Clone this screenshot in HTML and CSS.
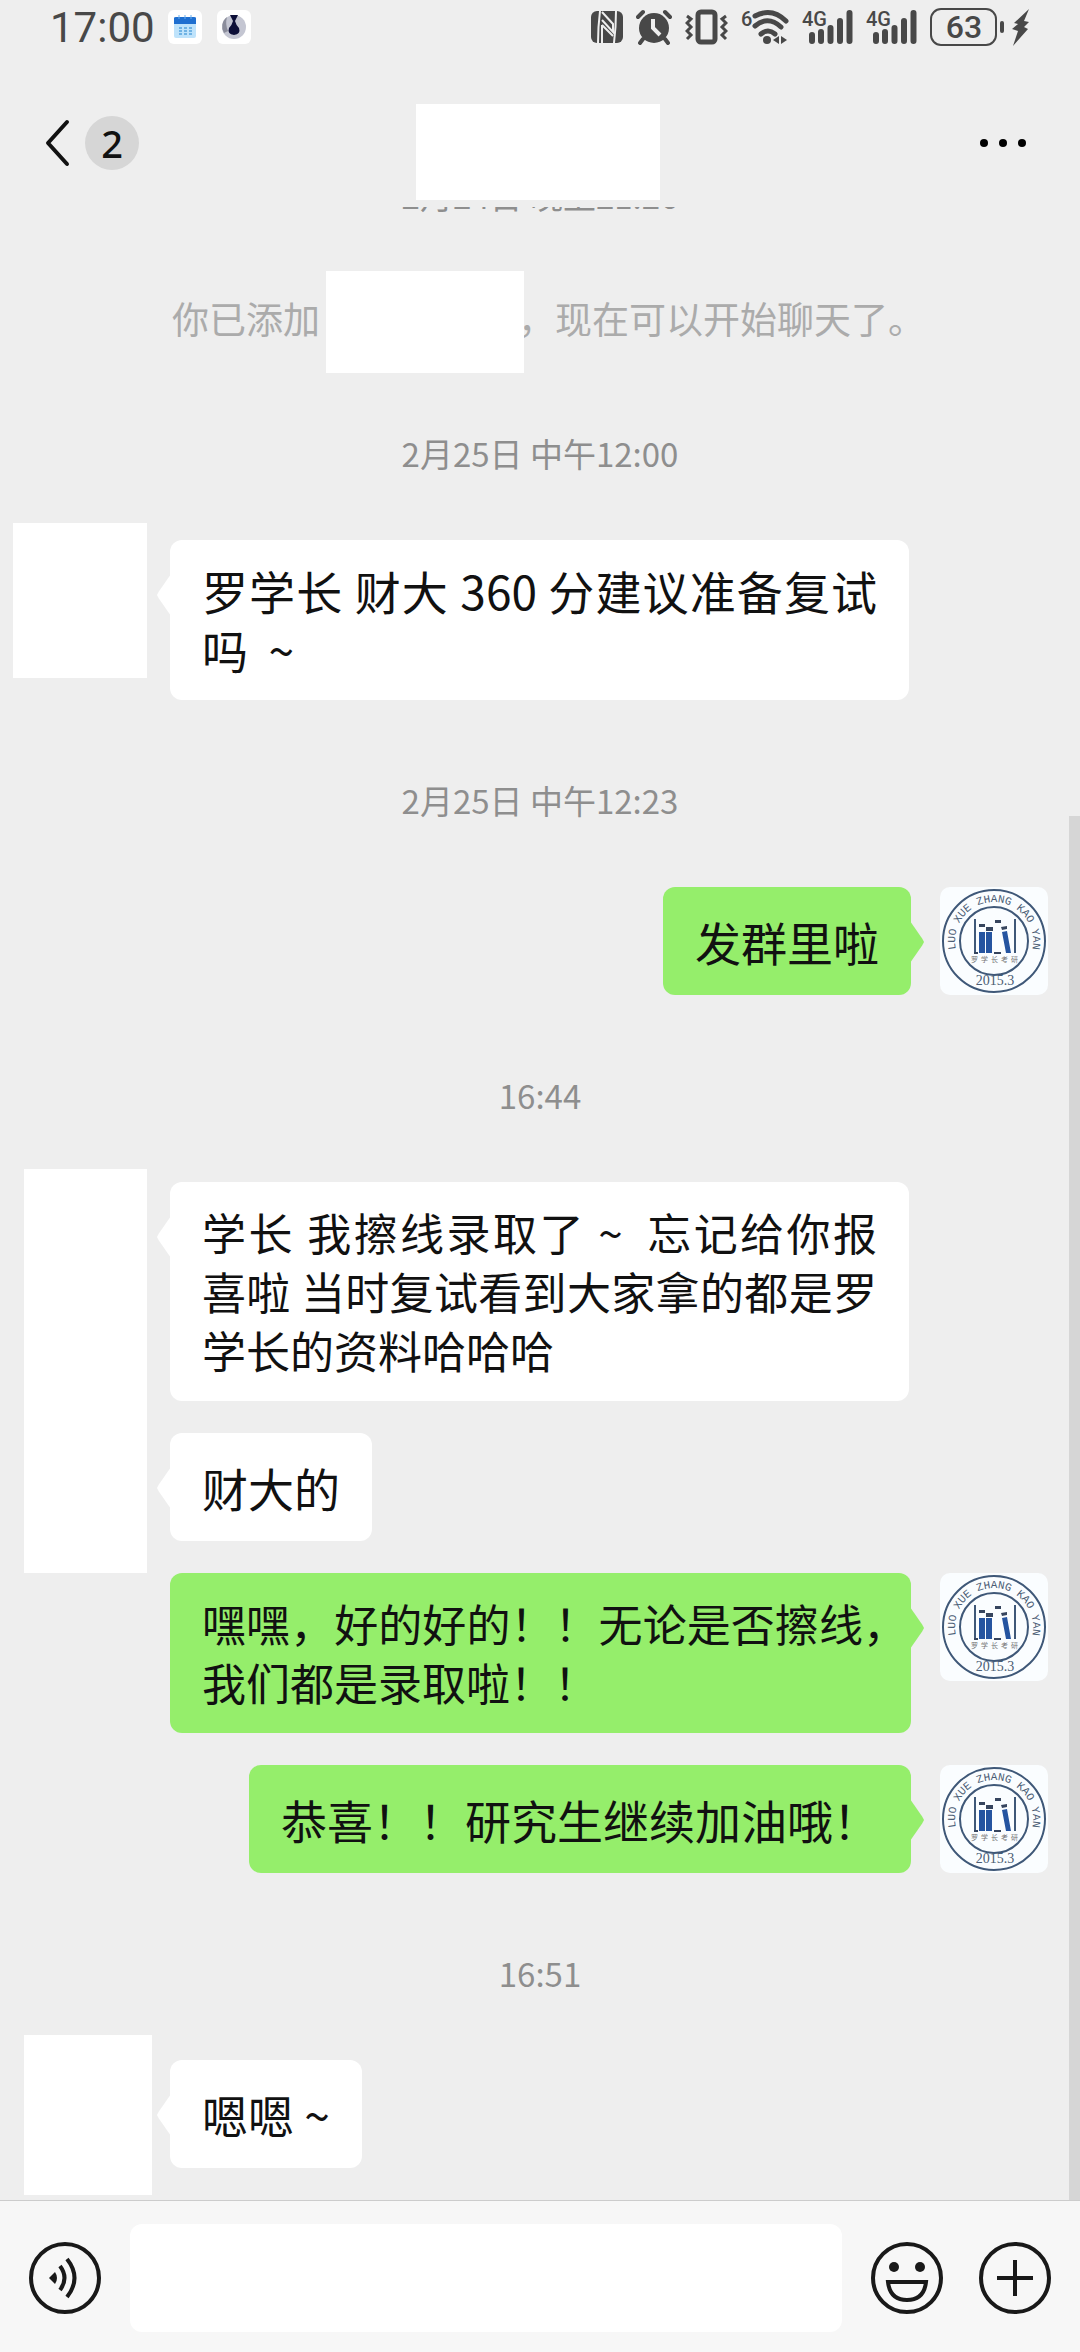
FILE: index.html
```html
<!DOCTYPE html>
<html lang="zh-CN">

<head>
    <meta charset="UTF-8" />
    <meta name="viewport" content="width=device-width, initial-scale=1.0">
    <title>聊天</title>
    <link rel="stylesheet" href="styles.css">
</head>

<body>
    <header class="header">
        <div class="status">
            <span class="clock">17:00</span>
            <svg class="chip" viewBox="0 0 34 34">
                <path d="M6 13h22v13q0 2-2 2H8q-2 0-2-2z" fill="#bfe3fb" />
                <path d="M6 14V8q0-1 2-1h18q2 0 2 1v6z" fill="#1f6fd0" />
                <path d="M11 5v4M17 5v4M23 5v4" stroke="#69aef0" stroke-width="1" />
                <path d="M11 18h3m2 0h3m2 0h3M11 21h3m2 0h3m2 0h3M11 24h3m2 0h3m2 0h3" stroke="#70b3e4" stroke-width="2" />
            </svg>
            <svg class="chip" viewBox="0 0 34 34">
                <circle cx="17" cy="17" r="12" fill="#c4c6d2" />
                <path d="M7 23a12 12 0 0 1 3-16q-2 7 1 14z" fill="#8b8d9b" />
                <path d="M13 5h8l-3 6q1 4 4 7 2 6-5 7-7-1-5-7 3-3 4-7z" fill="#0d0f38" />
            </svg>
            <div class="status-icons">
                <svg width="32" height="36" viewBox="0 0 32 36">
                    <rect x="0" y="2" width="32" height="32" rx="6" fill="#484848" />
                    <path d="M9 2q-2 16-2 32M23 34q2-16 2-32" fill="none" stroke="#eee" stroke-width="2" />
                    <path d="M11 3l11 12v8L11 11M11 16v18M11 16l11 11" fill="none" stroke="#eee" stroke-width="2" />
                </svg>
                <svg width="36" height="36" viewBox="0 0 36 36">
                    <circle cx="18" cy="19" r="15" fill="#484848" />
                    <path d="M7 30l-3 4M29 30l3 4M2 8l5-5M34 8l-5-5" stroke="#484848" stroke-width="4" stroke-linecap="round" />
                    <path d="M17 10v9l7 7" fill="none" stroke="#eee" stroke-width="4" />
                </svg>
                <svg width="43" height="36" viewBox="0 0 43 36">
                    <g fill="none" stroke="#484848">
                        <rect x="13" y="3" width="17" height="30" rx="3" stroke-width="5" />
                        <path d="M2 7l4 3-4 4 4 4-4 4 4 4-4 4M41 7l-4 3 4 4-4 4 4 4-4 4 4 4" stroke-width="3" />
                    </g>
                </svg>
                <svg width="48" height="36" viewBox="0 0 48 36">
                    <text class="net-text" x="0" y="17">6</text>
                    <path d="M14 7q17-9 31 5M14 17q13-11 26 1M20 25q7-6 14 0" fill="none" stroke="#484848" stroke-width="5" stroke-linecap="round" />
                    <circle cx="26" cy="31" r="4" fill="#484848" />
                    <path d="M38 27v8l-6-4zM40 27v8l6-4z" fill="#484848" />
                </svg>
                <svg width="51" height="36">
                    <g id="signal">
                        <text class="net-text" x="0" y="17">4G</text>
                        <path d="M10 26v6M19 23v9M28.500 19v13M38 12v20M47.500 4v28" fill="none" stroke="#484848" stroke-width="6" stroke-linecap="round" />
                    </g>
                </svg>
                <svg width="51" height="36"><use href="#signal" /></svg>
                <svg width="100" height="38" viewBox="0 0 100 38">
                    <rect x="1" y="1" width="65" height="36" rx="10" fill="none" stroke="#484848" stroke-width="2" />
                    <text class="battery-text" x="34" y="30" text-anchor="middle">63</text>
                    <path d="M72 15v8" stroke="#484848" stroke-width="4" stroke-linecap="round" />
                    <path d="M99 1L84 15l4 1-6 5 6 2-5 15 15-17-4-2 5-5-5-1z" fill="#484848" />
                </svg>
            </div>
        </div>
        <nav class="nav">
            <button class="back" type="button" aria-label="返回">
                <svg width="26" height="50" viewBox="0 0 26 50">
                    <path d="M22 4L3 25l19 21" fill="none" stroke="#111" stroke-width="4" stroke-linecap="round" stroke-linejoin="round" />
                </svg>
                <span class="unread">2</span>
            </button>
            <div class="title"></div>
            <button class="more" type="button" aria-label="更多">
                <svg width="48" height="10" viewBox="0 0 48 10">
                    <circle cx="5" cy="5" r="4" />
                    <circle cx="24" cy="5" r="4" />
                    <circle cx="43" cy="5" r="4" />
                </svg>
            </button>
        </nav>
    </header>

    <main class="chat">
        <div class="scrollbar"></div>
        <p class="time time-first">2月24日 晚上21:26</p>
        <p class="notice">你已添加<span class="notice-name"></span>，现在可以开始聊天了。</p>

        <p class="time">2月25日 中午12:00</p>
        <div class="group">
            <div class="cover cover-a"></div>
            <div class="messages">
                <div class="bubble">罗学长 财大 360 分建议准备复试吗&nbsp; ~</div>
            </div>
        </div>

        <p class="time">2月25日 中午12:23</p>
        <div class="group group-out">
            <div class="bubble">发群里啦</div>
            <svg class="avatar" viewBox="0 0 108 108">
                <g id="logo">
                    <path id="ring" d="M54 93 A39 39 0 1 1 54.1 93" fill="none" />
                    <circle cx="54" cy="54" r="51" fill="none" stroke="#3f5878" stroke-width="2" />
                    <circle cx="54" cy="54" r="34" fill="none" stroke="#3f5878" stroke-width="2" />
                    <text class="logo-ring"><textPath href="#ring" startOffset="50%" text-anchor="middle">LUO XUE ZHANG KAO YAN</textPath></text>
                    <text class="logo-year" x="55" y="98" text-anchor="middle">2015.3</text>
                    <text class="logo-name" x="31 41 51 61 71" y="75">罗学长考研</text>
                    <path d="M35 32v34M75 32v34" stroke="#3f5878" stroke-width="2" />
                    <path d="M39 45h6v21h-6zM46 45h6v21h-6zM62 45l5-1 4 22h-5z" fill="#2554a0" />
                    <path d="M39 37h6v3h-6zM46 40h7v4h-7zM55 33h6v3h-6zM61 40l6-1v3l-5 1zM54 65h7v2h-7zM34 65h4v2h-4z" fill="#36455e" />
                </g>
            </svg>
        </div>

        <p class="time">16:44</p>
        <div class="group">
            <div class="cover cover-b"></div>
            <div class="messages">
                <div class="bubble bubble-long">学长 我擦线录取了 ~&nbsp; 忘记给你报喜啦 当时复试看到大家拿的都是罗学长的资料哈哈哈</div>
                <div class="bubble">财大的</div>
            </div>
        </div>
        <div class="group group-out">
            <div class="bubble bubble-long">嘿嘿，好的好的！！无论是否擦线，我们都是录取啦！！</div>
            <svg class="avatar" viewBox="0 0 108 108"><use href="#logo" /></svg>
        </div>
        <div class="group group-out">
            <div class="bubble">恭喜！！研究生继续加油哦！</div>
            <svg class="avatar" viewBox="0 0 108 108"><use href="#logo" /></svg>
        </div>

        <p class="time">16:51</p>
        <div class="group">
            <div class="cover cover-c"></div>
            <div class="messages">
                <div class="bubble">嗯嗯 ~</div>
            </div>
        </div>
    </main>

    <footer class="composer">
        <button type="button" aria-label="语音">
            <svg width="72" height="72" viewBox="0 0 72 72">
                <g fill="none" stroke="#191919" stroke-width="4">
                    <circle cx="36" cy="36" r="34" />
                    <path d="M31 24q9 12 0 24M38 17q15 19 0 38" />
                </g>
                <path d="M20 36l6-6q4 6 0 12z" fill="#191919" />
            </svg>
        </button>
        <input class="input" type="text" aria-label="输入消息">
        <button type="button" aria-label="表情">
            <svg width="72" height="72" viewBox="0 0 72 72">
                <g fill="none" stroke="#191919" stroke-width="4">
                    <circle cx="36" cy="36" r="34" />
                    <path d="M17 40h38q-2 18-19 18T17 40z" />
                </g>
                <circle cx="23" cy="25" r="5" fill="#191919" />
                <circle cx="49" cy="25" r="5" fill="#191919" />
            </svg>
        </button>
        <button class="plus" type="button" aria-label="更多功能">
            <svg width="72" height="72" viewBox="0 0 72 72">
                <g fill="none" stroke="#191919" stroke-width="4">
                    <circle cx="36" cy="36" r="34" />
                    <path d="M36 18v36M18 36h36" />
                </g>
            </svg>
        </button>
    </footer>
</body>

</html>
```
FILE: styles.css
```css
* {
    box-sizing: border-box;
}

body {
    margin: 0;
    min-height: 100vh;
    display: flex;
    flex-direction: column;
    background: #eee;
    color: #111;
    font-family: "Noto Sans CJK SC", "Noto Sans", sans-serif;
}

p {
    margin: 0;
}

svg {
    display: block;
}

button {
    padding: 0;
    border: none;
    background: none;
    color: inherit;
    font: inherit;
    cursor: pointer;
}

/* 状态栏 */
.status {
    display: flex;
    align-items: center;
    height: 54px;
    padding: 0 50px;
    color: #484848;
}

.clock {
    margin-right: 13px;
    font-family: Roboto, sans-serif;
    font-size: 42px;
}

.chip {
    width: 34px;
    height: 34px;
    margin-right: 15px;
    border-radius: 6px;
    background: #fff;
}

.status-icons {
    display: flex;
    align-items: center;
    gap: 13px;
    margin-left: auto;
}

.net-text,
.battery-text {
    fill: #484848;
    font-family: Roboto, sans-serif;
    font-size: 20px;
    font-weight: 500;
}

.battery-text {
    font-size: 32px;
}

/* 标题栏 */
.nav {
    display: grid;
    grid-template-columns: 1fr 244px 1fr;
    align-items: center;
    height: 153px;
    padding: 25px 50px 0 45px;
}

.back {
    display: flex;
    align-items: center;
    gap: 14px;
    justify-self: start;
}

.unread {
    width: 54px;
    height: 54px;
    border-radius: 50%;
    background: #d6d6d6;
    font-family: "Noto Sans", sans-serif;
    font-size: 38px;
    font-weight: 500;
    line-height: 54px;
    text-align: center;
}

.title {
    align-self: end;
    height: 96px;
    margin-bottom: 7px;
    background: #fff;
}

.more {
    justify-self: end;
    padding-right: 3px;
}

/* 聊天内容 */
.chat {
    position: relative;
    flex: 1;
    overflow: hidden;
    padding-bottom: 32px;
}

.scrollbar {
    position: absolute;
    top: 609px;
    right: 0;
    bottom: 0;
    width: 11px;
    background: #d6d6d6;
}

.time {
    margin: 78px 0 65px;
    color: #8e8e8e;
    font-size: 33px;
    line-height: 44px;
    text-align: center;
}

.time-first {
    margin: -34px 0 54px;
}

.notice {
    display: flex;
    align-items: flex-start;
    margin-bottom: 58px;
    padding-left: 172px;
    color: #ababab;
    font-size: 37px;
    line-height: 94px;
    white-space: nowrap;
}

.notice-name {
    position: relative;
    width: 198px;
    height: 102px;
    margin: 0 -6px 0 6px;
    background: #fff;
}

.notice + .time {
    margin-top: 0;
}

.group {
    display: flex;
    align-items: flex-start;
}

.group + .group {
    margin-top: 32px;
}

.group-out {
    justify-content: flex-end;
    gap: 29px;
    padding: 0 32px 0 170px;
}

.messages {
    display: flex;
    flex: 1;
    flex-direction: column;
    align-items: flex-start;
    gap: 32px;
    padding-right: 171px;
}

.bubble {
    position: relative;
    min-height: 108px;
    padding: 21px 32px;
    border-radius: 12px;
    background: #fff;
    font-size: 46px;
    line-height: 59px;
    align-content: center;
    text-align: justify;
}

.bubble-long {
    font-size: 44px;
}

/* 气泡箭头 */
.bubble::before {
    content: "";
    position: absolute;
    top: 34px;
    left: -13px;
    width: 14px;
    height: 42px;
    background: inherit;
    clip-path: polygon(100% 0, 12% 42%, 0 50%, 12% 58%, 100% 100%);
}

.group-out .bubble {
    background: #95ee6b;
}

/* 行末全角逗号占进右侧留白 */
.group-out .bubble-long {
    padding-right: 4px;
}

.group-out .bubble::before {
    right: -13px;
    left: auto;
    clip-path: polygon(0 0, 88% 42%, 100% 50%, 88% 58%, 0 100%);
}

.cover {
    flex: none;
    background: #fff;
}

.cover-a {
    width: 134px;
    height: 155px;
    margin: -17px 23px 0 13px;
}

.cover-b {
    align-self: stretch;
    width: 123px;
    margin: -13px 23px -32px 24px;
}

.cover-c {
    width: 128px;
    height: 160px;
    margin: -25px 18px -27px 24px;
}

.avatar {
    flex: none;
    width: 108px;
    height: 108px;
    border-radius: 10px;
    background: #fafdff;
}

.logo-ring {
    fill: #4a5c74;
    font-family: "Liberation Mono", monospace;
    font-size: 11px;
}

.logo-year {
    fill: #4a5c74;
    font-family: "Liberation Serif", serif;
    font-size: 14px;
}

.logo-name {
    fill: #777;
    font-size: 7px;
}

/* 输入栏 */
.composer {
    display: flex;
    align-items: center;
    gap: 29px;
    padding: 23px 29px 20px;
    border-top: 1px solid #ccc;
    background: #f7f7f7;
}

.input {
    flex: 1;
    min-width: 0;
    height: 108px;
    padding: 0 24px;
    border: none;
    border-radius: 12px;
    background: #fff;
    font: inherit;
    font-size: 46px;
}

.plus {
    margin-left: 7px;
}
```
